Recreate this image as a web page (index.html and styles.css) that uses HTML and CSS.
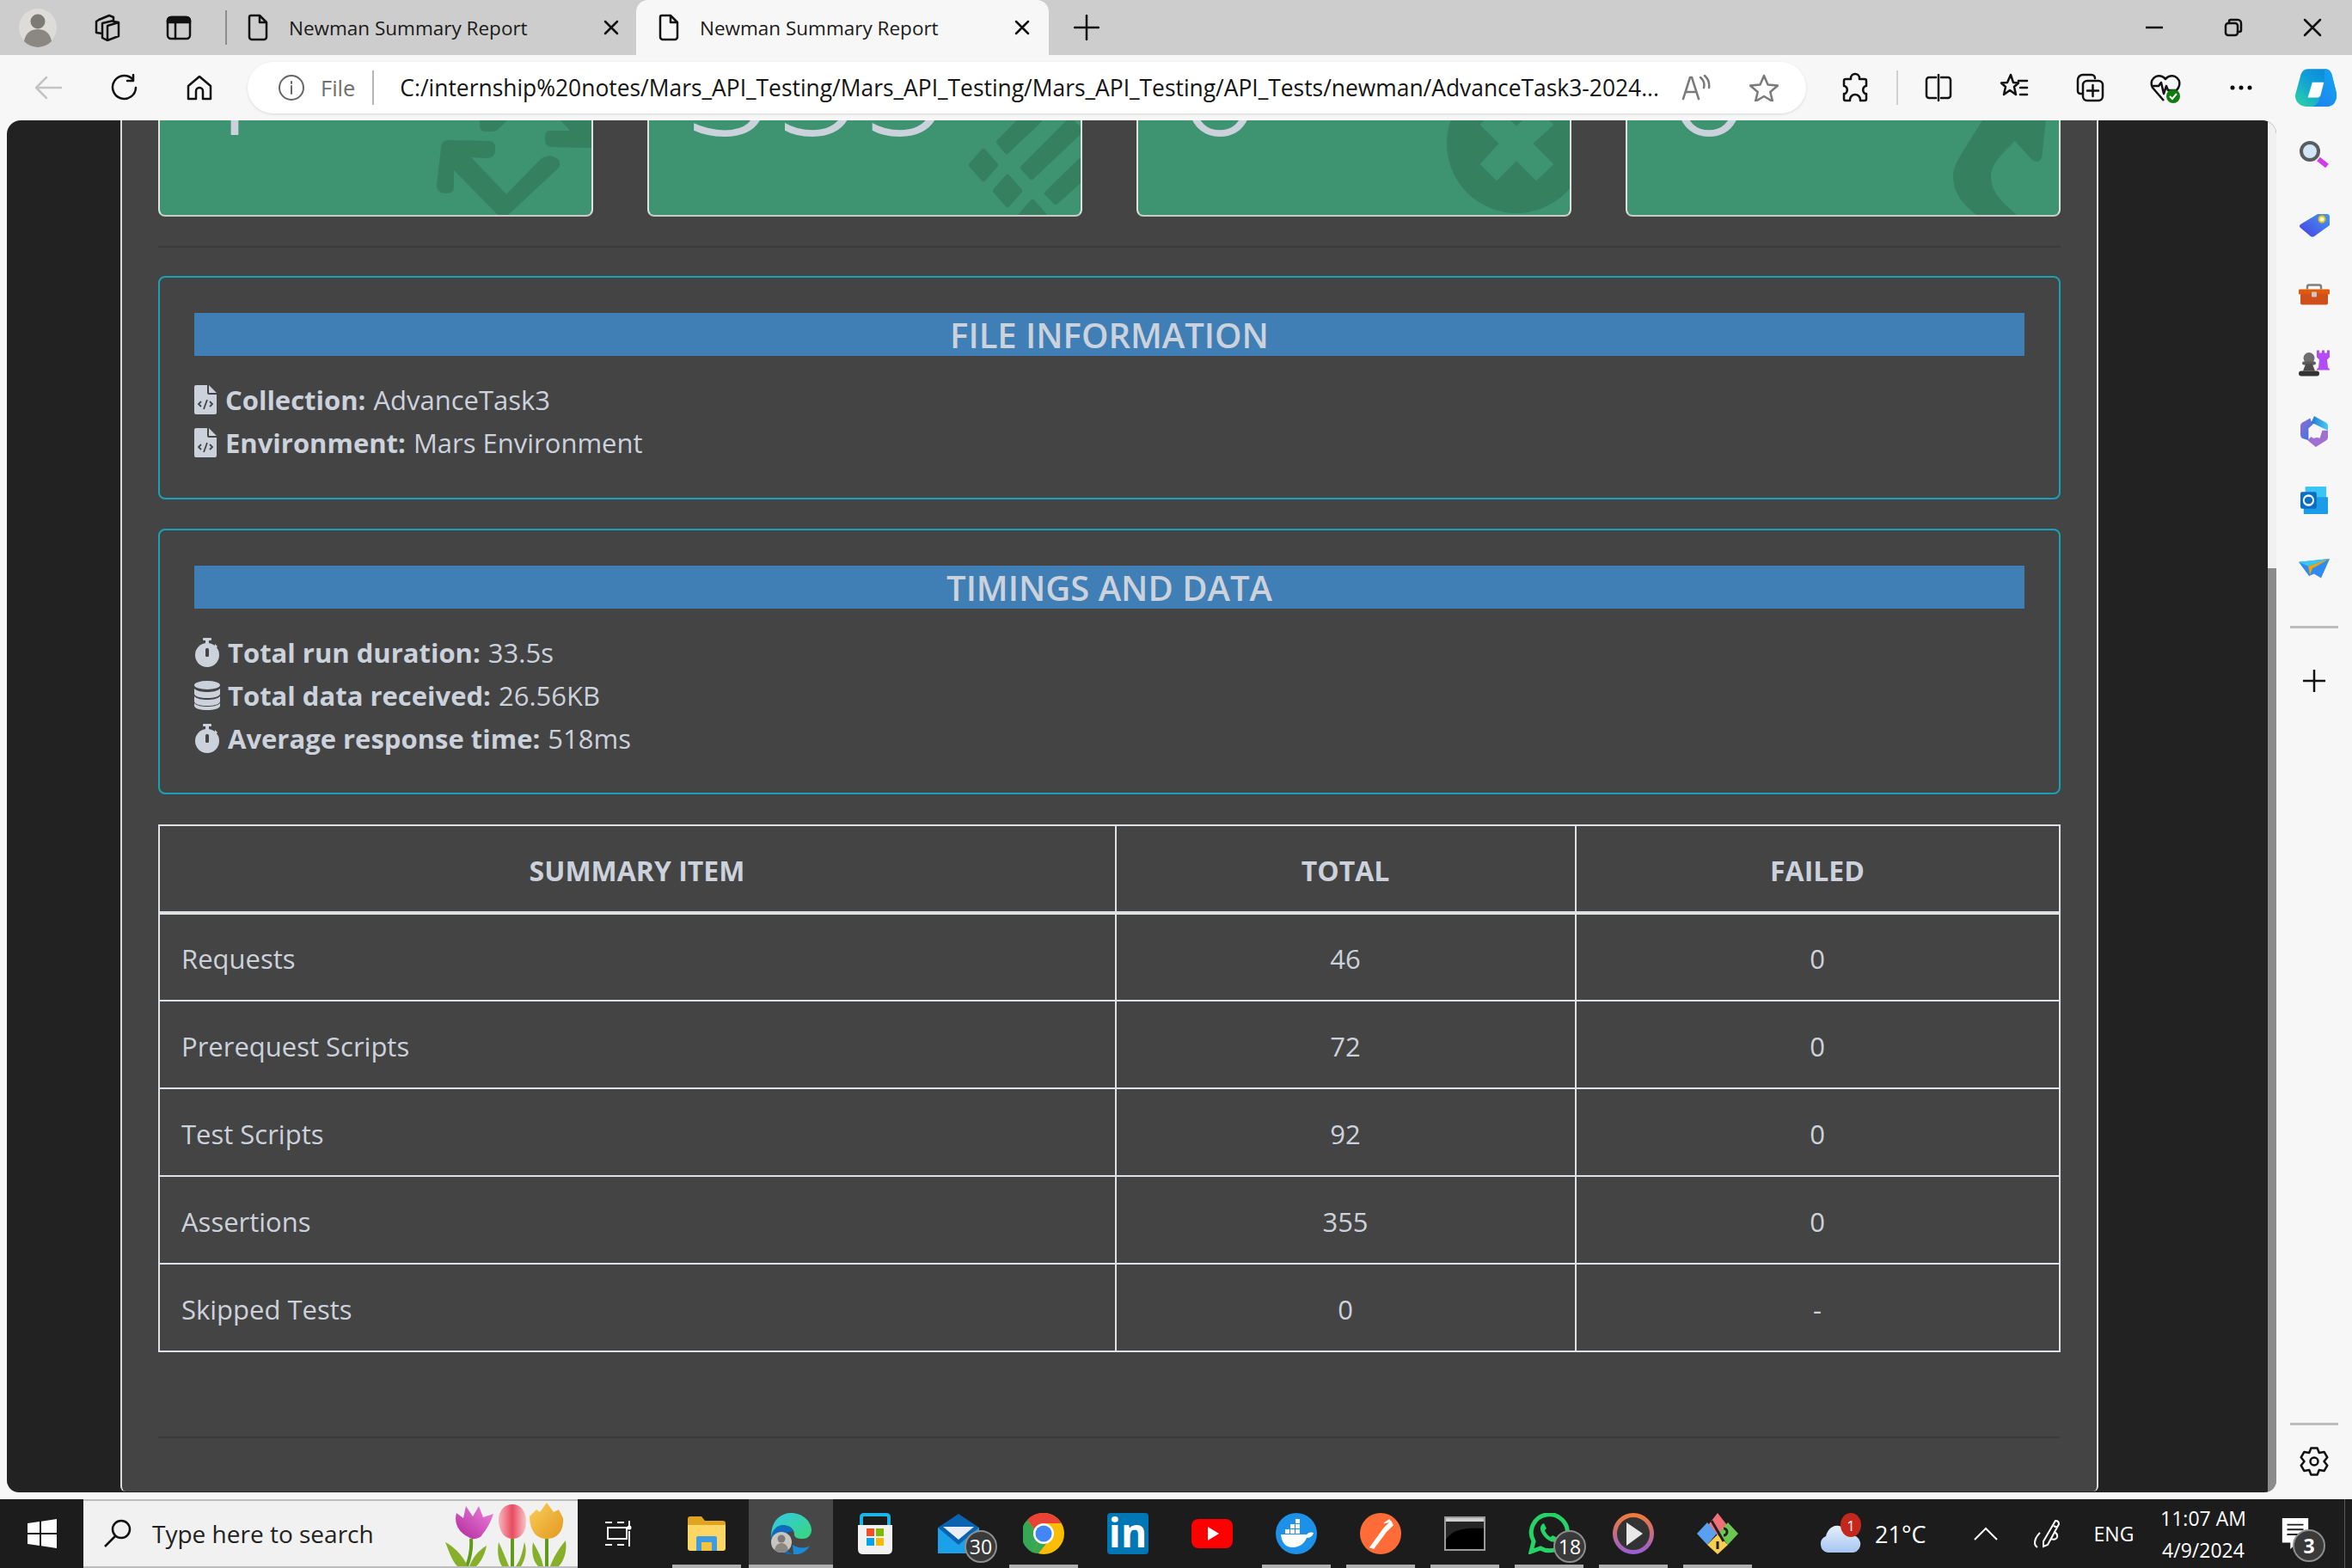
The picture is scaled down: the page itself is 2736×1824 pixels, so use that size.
FILE: index.html
```html
<!DOCTYPE html>
<html lang="en">
<head>
<meta charset="utf-8">
<title>Newman Summary Report</title>
<link rel="stylesheet" href="styles.css">
</head>
<body>
<div class="tabstrip">
  <div class="ts-profile"><svg width="44" height="46" viewBox="0 0 44 46"><circle cx="22" cy="23" r="22" fill="#dedcd8"/><circle cx="22" cy="16" r="8.5" fill="#7d7a75"/><path d="M6 39c2-11 9-14 16-14s14 3 16 14a22 22 0 0 1-32 0z" fill="#8b8883"/></svg></div>
  <div class="ts-work"><svg class="ic" width="34" height="32" viewBox="0 0 34 32"><path d="M8 7 20 2l5 2v5l6 1v16l-13 5-6-3v-5l-7-1V9z M12 22V11l13-3 M18 30V14l13-4" /></svg></div>
  <div class="ts-vert"><svg class="ic" width="30" height="30" viewBox="0 0 30 30"><rect x="2" y="3" width="26" height="25" rx="4"/><path d="M2 9h26V7a4 4 0 0 0-4-4H6a4 4 0 0 0-4 4z" fill="#111"/><path d="M11 9v19"/></svg></div>
  <div class="ts-div"></div>
  <div class="tab">
    <svg class="ic doc" width="24" height="32" viewBox="0 0 24 32"><path d="M4 2h10l8 8v17a3 3 0 0 1-3 3H5a3 3 0 0 1-3-3V4a2 2 0 0 1 2-2z M14 2v8h8"/></svg>
    <span class="tab-title">Newman Summary Report</span>
    <svg class="ic tab-x" width="20" height="20" viewBox="0 0 20 20"><path d="M3 3l14 14M17 3L3 17"/></svg>
  </div>
  <div class="tab tab-active">
    <svg class="ic doc" width="24" height="32" viewBox="0 0 24 32"><path d="M4 2h10l8 8v17a3 3 0 0 1-3 3H5a3 3 0 0 1-3-3V4a2 2 0 0 1 2-2z M14 2v8h8"/></svg>
    <span class="tab-title">Newman Summary Report</span>
    <svg class="ic tab-x" width="20" height="20" viewBox="0 0 20 20"><path d="M3 3l14 14M17 3L3 17"/></svg>
  </div>
  <div class="ts-new"><svg class="ic" width="30" height="30" viewBox="0 0 30 30"><path d="M15 1v28M1 15h28"/></svg></div>
  <div class="grow"></div>
  <div class="win"><svg class="ic" width="20" height="4" viewBox="0 0 20 4"><path d="M0 2h20"/></svg></div>
  <div class="win"><svg class="ic" width="22" height="22" viewBox="0 0 22 22"><rect x="2" y="6" width="14" height="14" rx="3"/><path d="M6 6V4a2 2 0 0 1 2-2h8a4 4 0 0 1 4 4v8a2 2 0 0 1-2 2h-2"/></svg></div>
  <div class="win"><svg class="ic" width="22" height="22" viewBox="0 0 22 22"><path d="M2 2l18 18M20 2L2 20"/></svg></div>
</div>

<div class="toolbar">
  <div class="tb"><svg class="ic ic-dim" width="34" height="30" viewBox="0 0 34 30"><path d="M32 15H3M15 3 3 15l12 12"/></svg></div>
  <div class="tb"><svg class="ic" width="32" height="32" viewBox="0 0 32 32"><path d="M27 7a13.500 13.500 0 1 0 3 9M27 1v7h-7"/></svg></div>
  <div class="tb"><svg class="ic" width="32" height="32" viewBox="0 0 32 32"><path d="M16 3 3 14v15h9v-9a4 4 0 0 1 8 0v9h9V14z"/></svg></div>
  <div class="address">
    <svg class="ic ic-info" width="32" height="32" viewBox="0 0 32 32"><circle cx="16" cy="16" r="14"/><path d="M16 14v9M16 9v2"/></svg>
    <span class="addr-file">File</span>
    <span class="addr-div"></span>
    <span class="addr-url">C:/internship%20notes/Mars_API_Testing/Mars_API_Testing/Mars_API_Testing/API_Tests/newman/AdvanceTask3-2024...</span>
    <svg class="ic ic-grey addr-read" width="34" height="32" viewBox="0 0 34 32"><path d="M2 29 10 4h2l8 25M5 21h12M22 4a12 12 0 0 1 4 12M27 2a16 16 0 0 1 5 14"/></svg>
    <svg class="ic ic-grey addr-star" width="34" height="32" viewBox="0 0 34 32"><path d="M17 2l4.500 10.500 11.500 1-8.700 7.500 2.700 11L17 26l-10 6 2.700-11L1 13.500l11.500-1z"/></svg>
  </div>
  <div class="tb tb-ext"><svg class="ic" width="34" height="36" viewBox="0 0 34 36"><path d="M17 2a5 5 0 0 1 5 5v1h6a2 2 0 0 1 2 2v6h-1a5 5 0 0 0 0 9h1v6a2 2 0 0 1-2 2h-5v-1a6 6 0 0 0-12 0v1H6a2 2 0 0 1-2-2v-6h1a5 5 0 0 0 0-9H4v-6a2 2 0 0 1 2-2h6V7a5 5 0 0 1 5-5z"/></svg></div>
  <div class="tb-div"></div>
  <div class="tb"><svg class="ic" width="32" height="32" viewBox="0 0 32 32"><path d="M16 1v30M13 4H5a3 3 0 0 0-3 3v18a3 3 0 0 0 3 3h8M19 4h8a3 3 0 0 1 3 3v18a3 3 0 0 1-3 3h-8"/></svg></div>
  <div class="tb"><svg class="ic" width="34" height="34" viewBox="0 0 34 34"><path d="M13 2l3 9 6 .5-5 4.500 2 9-7-5-7 5 2-9-5-4.500 7-.5zM22 9h10M24 17h8M24 25h8"/></svg></div>
  <div class="tb"><svg class="ic" width="34" height="34" viewBox="0 0 34 34"><path d="M8 24H6a3 3 0 0 1-3-3V8a6 6 0 0 1 6-6h10a4 4 0 0 1 4 4"/><rect x="9" y="9" width="23" height="23" rx="5"/><path d="M20.500 14v13M14 20.500h13"/></svg></div>
  <div class="tb"><svg width="38" height="38" viewBox="0 0 38 38"><path class="ic-p" d="M17 34 4 19a9 9 0 0 1 13-12l2 2 2-2a9 9 0 0 1 13 12l-2 3H22l-2-5-3 9-3-13-3 4H4"/><circle cx="28" cy="29" r="8" fill="#107c10"/><path d="M24 29l3 3 5-6" fill="none" stroke="#fff" stroke-width="2"/></svg></div>
  <div class="tb"><svg width="28" height="8" viewBox="0 0 28 8"><circle cx="4" cy="4" r="2.500"/><circle cx="14" cy="4" r="2.500"/><circle cx="24" cy="4" r="2.500"/></svg></div>
  <div class="tb tb-copilot"><svg width="50" height="46" viewBox="0 0 48 44"><defs><linearGradient id="cpa" x1="0" y1="1" x2="1" y2="0"><stop offset="0" stop-color="#2fd6a0"/><stop offset=".5" stop-color="#10a0d8"/><stop offset="1" stop-color="#0b7fd8"/></linearGradient><linearGradient id="cpb" x1="0" y1="1" x2="1" y2="0"><stop offset="0" stop-color="#1f7ff0"/><stop offset="1" stop-color="#12a8f0"/></linearGradient></defs><path d="M15 1h19c5 0 7 3 8 7l5 20c1 8-3 15-10 15H13C6 43 0 37 1 30L7 8c1-4 4-7 8-7z" fill="url(#cpa)"/><path d="M34 1c5 0 7 3 8 7l5 20c1 8-3 15-10 15H20c4-1 7-4 8-8l5-17c1-4 0-12 1-17z" fill="url(#cpb)"/><path d="M20 16h13l-4 15c-1 1-2 2-4 2H15z" fill="#fff"/></svg></div>
</div>

<div class="main">
  <div class="viewport">
    <div class="scroller">
      <div class="report">
        <div class="cards">
          <div class="card">
            <svg class="card-art" viewBox="184 0 506 252"><path d="M513 172q0-9 9-9l46 1q8 0 8 8v4q-1 8-10 8l-18-1 41 43 41-42q11-6 20 2 3 6-1 10l-60 56h-8l-53-54v19q0 8-9 8-11 0-11-10z M558 140v7q0 6 8 6h6q5 0 8-3l10-10z M652 140l11 12h-23q-6 0-6 8v3q0 8 8 8l46 1v-32z"/></svg>
            <div class="card-num card-num-one">1</div>
          </div>
          <div class="card">
            <svg class="card-art" viewBox="753 0 506 252"><path class="round" d="M1130 192 1144 176 1158 192 1144 208z M1158 222 1172 206 1186 222 1172 238z M1187 251 1201 235 1215 251 1201 267z M1187 140h22l-38 36-9-11z M1245 140l12 12-57 54-10-11z M1257 187v22l-29 26-10-10z"/></svg>
            <div class="card-num">355</div>
          </div>
          <div class="card">
            <svg class="card-art" viewBox="1322 0 506 252"><circle cx="1764" cy="167" r="81"/><path class="cut" d="M1745 167 1723 145 1741 127 1764 148 1787 127 1806 145 1782 167 1806 191 1787 209 1764 186 1741 209 1723 191z"/></svg>
            <div class="card-num">0</div>
          </div>
          <div class="card">
            <svg class="card-art" viewBox="1891 0 506 252"><path d="M2312 130C2285 175 2272 190 2272 205 2272 225 2285 240 2302 252H2348C2330 235 2316 225 2316 205 2316 190 2330 178 2344 164L2362 184Q2370 192 2375 184L2381 130z"/></svg>
            <div class="card-num">0</div>
          </div>
        </div>
        <hr class="rule rule-top">
        <section class="box">
          <h4 class="box-title">FILE INFORMATION</h4>
          <div class="box-rows">
            <div class="info">
              <svg class="ri ri-file" width="26" height="34" viewBox="0 0 26 34"><path d="M2 0h13v9q0 2 2 2h9v21q0 2-2 2H2q-2 0-2-2V2q0-2 2-2z M17 0l9 9h-9z"/><path class="ri-code" d="M8 19l-3 3 3 3M18 19l3 3-3 3M15 17l-4 11"/></svg>
              <b>Collection:</b> <span>AdvanceTask3</span>
            </div>
            <div class="info">
              <svg class="ri ri-file" width="26" height="34" viewBox="0 0 26 34"><path d="M2 0h13v9q0 2 2 2h9v21q0 2-2 2H2q-2 0-2-2V2q0-2 2-2z M17 0l9 9h-9z"/><path class="ri-code" d="M8 19l-3 3 3 3M18 19l3 3-3 3M15 17l-4 11"/></svg>
              <b>Environment:</b> <span>Mars Environment</span>
            </div>
          </div>
        </section>
        <section class="box box-time">
          <h4 class="box-title">TIMINGS AND DATA</h4>
          <div class="box-rows">
            <div class="info">
              <svg class="ri ri-wide" width="30" height="34" viewBox="0 0 30 34"><rect x="10" y="0" width="10" height="3" rx="1"/><rect x="13" y="2" width="4" height="6"/><path d="M24 7l3 3-3 3z"/><circle cx="15" cy="20" r="14"/><rect class="ri-hand" x="13" y="12" width="4" height="10" rx="1.500"/></svg>
              <b>Total run duration:</b> <span>33.5s</span>
            </div>
            <div class="info">
              <svg class="ri ri-wide" width="30" height="34" viewBox="0 0 30 34"><ellipse cx="15" cy="5" rx="15" ry="5"/><path d="M0 9v6c0 3 7 5 15 5s15-2 15-5V9c-3 3-9 4-15 4S3 12 0 9z M0 18v6c0 3 7 5 15 5s15-2 15-5v-6c-3 3-9 4-15 4S3 21 0 18z M0 26v3c0 3 7 5 15 5s15-2 15-5v-3c-3 3-9 4-15 4S3 29 0 26z"/></svg>
              <b>Total data received:</b> <span>26.56KB</span>
            </div>
            <div class="info">
              <svg class="ri ri-wide" width="30" height="34" viewBox="0 0 30 34"><rect x="10" y="0" width="10" height="3" rx="1"/><rect x="13" y="2" width="4" height="6"/><path d="M24 7l3 3-3 3z"/><circle cx="15" cy="20" r="14"/><rect class="ri-hand" x="13" y="12" width="4" height="10" rx="1.500"/></svg>
              <b>Average response time:</b> <span>518ms</span>
            </div>
          </div>
        </section>
        <table class="summary">
          <colgroup><col class="c1"><col class="c2"><col class="c3"></colgroup>
          <thead><tr><th>SUMMARY ITEM</th><th>TOTAL</th><th>FAILED</th></tr></thead>
          <tbody>
            <tr><td>Requests</td><td>46</td><td>0</td></tr>
            <tr><td>Prerequest Scripts</td><td>72</td><td>0</td></tr>
            <tr><td>Test Scripts</td><td>92</td><td>0</td></tr>
            <tr><td>Assertions</td><td>355</td><td>0</td></tr>
            <tr><td>Skipped Tests</td><td>0</td><td>-</td></tr>
          </tbody>
        </table>
        <hr class="rule rule-bottom">
      </div>
    </div>
    <div class="scrollbar"><div class="thumb"></div></div>
  </div>

  <aside class="sidebar">
    <div class="sb"><svg width="36" height="36" viewBox="0 0 36 36"><circle cx="13" cy="13" r="10" fill="#cfe7f8" stroke="#5c5c5c" stroke-width="4"/><path d="M23 22l10 8" stroke="#d13be8" stroke-width="6"/></svg></div>
    <div class="sb"><svg width="36" height="32" viewBox="0 0 36 28"><defs><linearGradient id="tag" x1="0" y1="1" x2="1" y2="0"><stop offset="0" stop-color="#4b3de0"/><stop offset="1" stop-color="#3f9bf5"/></linearGradient></defs><path d="M2 13 22 1h11q3 0 3 3v10L18 27q-2 1-4 0L2 17q-2-2 0-4z" fill="url(#tag)"/><circle cx="27" cy="7" r="3.500" fill="#fff" stroke="#f2c200" stroke-width="2"/></svg></div>
    <div class="sb"><svg width="36" height="27" viewBox="0 0 36 24"><path d="M10 6V3q0-2 2-2h12q2 0 2 2v3" fill="none" stroke="#808080" stroke-width="2.500"/><rect x="0" y="6" width="36" height="6" rx="1" fill="#e05a0c"/><rect x="2" y="11" width="32" height="13" rx="2" fill="#d0501c"/><rect x="15" y="9" width="6" height="6" rx="1" fill="#c9c9c9"/></svg></div>
    <div class="sb"><svg width="36" height="37" viewBox="0 0 36 30"><circle cx="12" cy="9" r="6.500" fill="#6e6e6e"/><rect x="4" y="13" width="16" height="4" rx="2" fill="#5b5b5b"/><path d="M8 16h8l3 8H5z" fill="#4c4c4c"/><rect x="0" y="24" width="24" height="6" rx="3" fill="#333"/><path d="M21 0h3v3h3V0h3v3h3V0h3v8l-3 3 1 9 2 2v1H21v-1l2-2 1-9-3-3z" fill="#b44cf5"/></svg></div>
    <div class="sb"><svg width="32" height="36" viewBox="0 0 34 28" preserveAspectRatio="none"><defs><linearGradient id="o1" x1="0" y1="0" x2="1" y2="1"><stop offset="0" stop-color="#9a6ad8"/><stop offset="1" stop-color="#2a7ad8"/></linearGradient><linearGradient id="o2" x1="0" y1="0" x2="1" y2="0"><stop offset="0" stop-color="#2a6ed0"/><stop offset="1" stop-color="#40d0f0"/></linearGradient></defs><path d="M17 0l15 6q2 1 2 3v4l-9-3-8-3-5 1z" fill="url(#o2)"/><path d="M2 6l10-4 3 6-5 3v11L2 20q-2-1-2-3V9q0-2 2-3z" fill="url(#o1)"/><path d="M34 13v6q0 2-2 3l-13 6-10-6 5-4 10 2 3-7z" fill="#a070d0"/><circle cx="17" cy="14" r="6" fill="#f7f7f7"/></svg></div>
    <div class="sb"><svg width="32" height="32" viewBox="0 0 34 26" preserveAspectRatio="none"><rect x="6" y="0" width="26" height="16" rx="1" fill="#39c5f5"/><path d="M4 10h30v15q0 1-1 1H5q-1 0-1-1z" fill="#1b9ce8"/><rect x="0" y="5" width="20" height="16" rx="2" fill="#0a6fc2"/><ellipse cx="10" cy="13" rx="6" ry="4.500" fill="none" stroke="#fff" stroke-width="2"/></svg></div>
    <div class="sb"><svg width="36" height="25" viewBox="0 0 36 20" preserveAspectRatio="none"><path d="M0 3 36 0 26 18 18 14l-6 2z" fill="#2f8bef"/><path d="M0 3l36-3-25 7z" fill="#39c5f5"/><path d="M36 0 11 7l2 8 3-6z" fill="#f0a30a"/></svg></div>
    <div class="sb-line sb-line-top"></div>
    <div class="sb sb-plus"><svg class="ic" width="26" height="26" viewBox="0 0 26 26"><path d="M13 0v26M0 13h26"/></svg></div>
    <div class="sb-line sb-line-bottom"></div>
    <div class="sb sb-gear"><svg class="ic" width="36" height="36" viewBox="0 0 36 36"><path d="M21.600 2.400 14.400 2.400 12.250 8.040 6.300 7.090 2.700 13.300 6.500 18 2.700 22.700 6.300 28.900 12.250 27.960 14.400 33.600 21.600 33.600 23.750 27.960 29.700 28.900 33.300 22.700 29.500 18 33.300 13.300 29.700 7.090 23.750 8.040z"/><circle cx="18" cy="18" r="4.500"/></svg></div>
  </aside>
</div>

<footer class="taskbar">
  <div class="start"><svg width="34" height="34" viewBox="0 0 34 34"><path d="M0 5l14-2v13H0zM16 2.700 34 0v16H16zM0 18h14v13L0 29zM16 18h18v16l-18-2.700z" fill="#fff"/></svg></div>
  <div class="search">
    <svg class="search-ic" width="34" height="34" viewBox="0 0 34 34"><circle cx="21" cy="12" r="10"/><path d="M14 20 2 32"/></svg>
    <span class="search-text">Type here to search</span>
    <svg class="tulips" width="142" height="74" viewBox="0 0 142 74"><defs><linearGradient id="tp" x1="0" y1="1" x2="1" y2="0"><stop offset="0" stop-color="#b0289c"/><stop offset="1" stop-color="#f084dc"/></linearGradient><linearGradient id="tc" x1="0" y1="0" x2="1" y2="0"><stop offset="0" stop-color="#f7b6bc"/><stop offset=".5" stop-color="#e84a60"/><stop offset="1" stop-color="#f8c4c8"/></linearGradient><linearGradient id="ty" x1="0" y1="0" x2="1" y2="1"><stop offset="0" stop-color="#f8cf5c"/><stop offset="1" stop-color="#e4981e"/></linearGradient></defs><path d="M30 42c1 12-2 24-5 32M78 42v32M118 42v32" fill="none" stroke="#5f9a18" stroke-width="4"/><path d="M26 74C20 60 8 50 0 46c4 10 8 22 14 28zM28 74c4-10 10-18 20-24-2 10-6 18-12 24zM74 74C70 64 66 54 62 46c-2 12 0 22 4 28zM82 74c6-8 8-18 10-28 4 10 0 22-4 28zM114 74c-2-10-6-18-12-28-2 12 0 22 6 28zM122 74c4-10 8-18 18-30 2 12-2 24-8 30z" fill="#86b02a"/><path d="M13 12l8 6 3-14 8 12 7-12 5 13 12-4c-3 10-8 18-13 24-2 5-12 7-16 3C14 34 10 22 13 12z" fill="url(#tp)"/><path d="M62 20C62 10 68 2 78 2s16 8 16 20c0 12-6 20-16 20S62 32 62 20z" fill="url(#tc)"/><path d="M98 16l8-8 4 3 8-11 8 11 6-3 5 10c1 14-6 24-19 24-14 0-20-12-20-26z" fill="url(#ty)"/></svg>
  </div>
  <div class="tasks">
    <div class="task"><svg class="task-view" width="36" height="34" viewBox="0 0 36 34"><g fill="none" stroke="#fff" stroke-width="2"><path d="M2 4h8M16 4h8M30 2v6M5 10h22v13H5zM2 30h8M16 30h8M30 14v18"/></g><circle cx="30" cy="10" r="2.500" fill="#fff"/></svg></div>
    <div class="task run"><svg width="44" height="40" viewBox="0 0 44 40"><path d="M0 3q0-3 3-3h13l4 5h21q3 0 3 3v6H0z" fill="#e0a520"/><path d="M0 10h44v27q0 3-3 3H3q-3 0-3-3z" fill="#fdd766"/><path d="M10 25q0-2 2-2h20q2 0 2 2v15H10z" fill="#3f9ce0"/><rect x="16" y="30" width="12" height="10" fill="#f2c33f"/></svg></div>
    <div class="task run task-active"><svg width="48" height="48" viewBox="0 0 48 48"><defs><linearGradient id="ed" x1="0" y1="0" x2="1" y2="1"><stop offset="0" stop-color="#34c8e8"/><stop offset="1" stop-color="#38d878"/></linearGradient></defs><path d="M24 0c14 0 24 10 24 20 0 5-4 10-10 10-7 0-10-2-10-5 0-8-8-11-14-10C8 17 3 22 1 29 0 12 10 0 24 0z" fill="url(#ed)"/><path d="M1 28c1-8 7-14 14-14 6 0 11 3 12 8-6-2-13 4-12 14 0 4 4 10 12 12C11 48 1 40 1 28z" fill="#0f6cbd"/><path d="M27 48c8 1 15-3 19-10-6 4-14 3-20-1z" fill="#1b8ad8"/><circle cx="13" cy="34" r="12" fill="#c8c6c2"/><circle cx="13" cy="30" r="4.500" fill="#7d7a75"/><path d="M5 43c1-6 5-8 8-8s7 2 8 8a12 12 0 0 1-16 0z" fill="#8b8883"/></svg></div>
    <div class="task"><svg width="44" height="48" viewBox="0 0 44 48"><path d="M6 14V5q0-3 3-3h26q3 0 3 3v9" fill="none" stroke="#1cb4e8" stroke-width="4"/><path d="M2 14h40v28q0 6-6 6H8q-6 0-6-6z" fill="#f2f2f2"/><rect x="12" y="18" width="9" height="9" fill="#f25022"/><rect x="23" y="18" width="9" height="9" fill="#7fba00"/><rect x="12" y="29" width="9" height="9" fill="#00a4ef"/><rect x="23" y="29" width="9" height="9" fill="#ffb900"/></svg></div>
    <div class="task"><svg width="50" height="46" viewBox="0 0 50 46"><path d="M0 16 24 0l24 16v30H0z" fill="#0b62b0"/><path d="M0 16v30h48V16L24 36z" fill="#1ba1ea"/><path d="M6 15h36L24 30z" fill="#e8eef3"/></svg><span class="count count-mail">30</span></div>
    <div class="task run"><svg width="48" height="48" viewBox="0 0 48 48"><circle cx="24" cy="24" r="24" fill="#fbbc04"/><path d="M24 0a24 24 0 0 1 21 12H24a12 12 0 0 0-11 7L5 8a24 24 0 0 1 19-8z" fill="#ea4335"/><path d="M5 8l8 11a12 12 0 0 0 5 15l-7 12A24 24 0 0 1 5 8z" fill="#34a853"/><path d="M18 34l5 0 7-2-12 15A24 24 0 0 1 11 46z" fill="#34a853"/><circle cx="24" cy="24" r="12" fill="#fff"/><circle cx="24" cy="24" r="9.500" fill="#4285f4"/></svg></div>
    <div class="task"><svg width="48" height="48" viewBox="0 0 48 48"><rect width="48" height="48" rx="4" fill="#0077b5"/><text x="24" y="40" text-anchor="middle" class="li-text">in</text></svg></div>
    <div class="task"><svg width="48" height="34" viewBox="0 0 48 34"><rect width="48" height="34" rx="8" fill="#f00"/><path d="M19 9l13 8-13 8z" fill="#fff"/></svg></div>
    <div class="task run"><svg width="48" height="48" viewBox="0 0 48 48"><circle cx="24" cy="24" r="24" fill="#1d91e8"/><path d="M6 25h30c2-3 6-3 8-2-1 4-4 6-8 6-3 7-9 11-16 11-9 0-13-6-14-15z" fill="#fff"/><g fill="#fff"><rect x="11" y="19" width="5" height="5"/><rect x="17" y="19" width="5" height="5"/><rect x="23" y="19" width="5" height="5"/><rect x="17" y="13" width="5" height="5"/><rect x="23" y="13" width="5" height="5"/><rect x="23" y="7" width="5" height="5"/></g></svg></div>
    <div class="task run"><svg width="48" height="48" viewBox="0 0 48 48"><circle cx="24" cy="24" r="24" fill="#ff6c37"/><path d="M12 40 28 18l8-8 2 4-8 8-14 19zM28 12l6-4 2 3" fill="#fff" stroke="#fff" stroke-width="1.500"/></svg></div>
    <div class="task run"><svg width="48" height="40" viewBox="0 0 48 40"><rect x="1" y="1" width="46" height="38" fill="#000" stroke="#9a9a9a" stroke-width="2"/><rect x="2" y="2" width="44" height="4" fill="#cfcfcf"/><path d="M2 27c8-13 24-14 44-13V6H2z" fill="#262626"/></svg></div>
    <div class="task run"><svg width="48" height="48" viewBox="0 0 48 48"><path d="M3 45l3-12a21 21 0 1 1 8 8z" fill="none" stroke="#25d366" stroke-width="5"/><path d="M16 13c-3 3-3 8 2 14s11 8 14 6l2-4-6-3-2 2c-3-1-6-5-7-8l2-2-3-6z" fill="#25d366"/></svg><span class="count count-wa">18</span></div>
    <div class="task run"><svg width="48" height="48" viewBox="0 0 48 48"><defs><linearGradient id="pl" x1="0" y1="0" x2="0" y2="1"><stop offset="0" stop-color="#f07a3a"/><stop offset="1" stop-color="#9a5fd0"/></linearGradient></defs><circle cx="24" cy="24" r="21.500" fill="#333" stroke="url(#pl)" stroke-width="5"/><path d="M16 11l19 13-19 14z" fill="#e8e8e8"/></svg></div>
    <div class="task run"><svg width="48" height="48" viewBox="0 0 48 48"><path d="M24 0l11 14-11 12-11-12z" fill="#f07078"/><path d="M0 24l12-13 11 13-11 13z" fill="#5aa0f0"/><path d="M48 24 36 11 25 24l11 13z" fill="#6cc850"/><path d="M24 48 12 37 24 25l12 12z" fill="#f8d050"/><path d="M17 9l14 24M31 18a4 4 0 1 1 0 8M24 33v9" fill="none" stroke="#222" stroke-width="3"/></svg></div>
  </div>
  <div class="tray">
    <div class="t-cloud"><svg width="50" height="34" viewBox="0 0 50 34"><defs><linearGradient id="cl" x1="0" y1="0" x2="0" y2="1"><stop offset="0" stop-color="#e6f0fa"/><stop offset="1" stop-color="#a6c6f2"/></linearGradient></defs><path d="M10 34a10 10 0 0 1-2-19C10 6 18 0 26 4c5 2 9 5 10 10a10 10 0 0 1 4 20z" fill="url(#cl)"/></svg><span class="t-alert">1</span></div>
    <div class="t-temp">21°C</div>
    <div class="t-up"><svg width="28" height="16" viewBox="0 0 28 16"><path d="M1 15 14 2l13 13" fill="none" stroke="#fff" stroke-width="2"/></svg></div>
    <div class="t-pen"><svg width="34" height="34" viewBox="0 0 34 34"><path d="M12 26 26 2q4 0 4 4L17 30l-5 2zM24 8l4 2M8 16q-6 6-6 12 0 3 3 5M24 15q5 2 4 6t-8 2" fill="none" stroke="#fff" stroke-width="2"/></svg></div>
    <div class="t-lang">ENG</div>
    <div class="t-clock"><span>11:07 AM</span><span>4/9/2024</span></div>
    <div class="t-notif"><svg width="32" height="36" viewBox="0 0 32 38"><path d="M0 0h32v30H18l-8 8v-8H0z" fill="#fff"/><path d="M6 8h20M6 14h20M6 20h20" stroke="#1c1c1c" stroke-width="2"/></svg><span class="count count-note">3</span></div>
    <div class="t-edge"></div>
  </div>
</footer>
</body>
</html>
```

FILE: styles.css
```css
* { box-sizing: border-box; }
html, body { margin: 0; padding: 0; }
body {
  width: 2736px;
  height: 1824px;
  overflow: hidden;
  display: flex;
  flex-direction: column;
  font-family: "Open Sans", "Liberation Sans", sans-serif;
  background: #f7f7f7;
}
.grow { flex: 1; }

/* shared stroke icons */
.ic { fill: none; stroke: #111; stroke-width: 2.5; stroke-linejoin: round; stroke-linecap: round; }
.ic-p { fill: none; stroke: #111; stroke-width: 2.5; stroke-linejoin: round; }
.ic-dim { stroke: #c4c4c4; }
.ic-grey { stroke: #7a7a7a; }

/* tab strip */
.tabstrip { height: 64px; flex: none; display: flex; align-items: center; background: #cdcdcd; }
.ts-profile { width: 88px; display: flex; justify-content: center; }
.ts-work { width: 72px; display: flex; justify-content: center; }
.ts-vert { width: 96px; display: flex; justify-content: center; }
.ts-div { width: 2px; height: 40px; margin-left: 6px; background: #8d8d8d; flex: none; }
.tab {
  width: 476px;
  height: 64px;
  flex: none;
  display: flex;
  align-items: center;
  padding: 0 19px 0 24px;
  border-radius: 14px 14px 0 0;
}
.tab-active { width: 480px; padding: 0 21px 0 26px; background: #f7f7f7; }
.tab-title { margin-left: 24px; font-size: 22.5px; color: #1a1a1a; white-space: nowrap; }
.tab-x { margin-left: auto; }
.ts-new { width: 88px; display: flex; justify-content: center; }
.win { width: 92px; flex: none; display: flex; justify-content: center; }

/* toolbar */
.toolbar { height: 76px; flex: none; display: flex; align-items: center; padding-left: 12px; background: #f7f7f7; }
.tb { width: 88px; height: 60px; flex: none; display: flex; align-items: center; justify-content: center; }
.tb-ext { margin-left: 13px; }
.tb-div { width: 2px; height: 40px; margin: 0 3px 0 4px; background: #d0d0d0; flex: none; }
.tb-copilot { flex: 1; }
.address {
  width: 1813px;
  height: 60px;
  margin-left: 12px;
  flex: none;
  display: flex;
  align-items: center;
  padding-left: 35px;
  background: #fff;
  border-radius: 30px;
  box-shadow: 0 1px 3px rgba(0, 0, 0, .12);
}
.ic-info { stroke: #666; stroke-width: 2; }
.addr-file { margin-left: 18px; font-size: 25.5px; color: #707070; }
.addr-div { width: 2px; height: 40px; margin: 0 30px 0 20px; background: #b5b5b5; flex: none; }
.addr-url { font-size: 26.4px; color: #141414; white-space: nowrap; }
.addr-read { margin-left: auto; }
.addr-star { margin: 0 32px 0 45px; }

/* main */
.main { height: 1604px; flex: none; display: flex; padding: 0 0 8px 8px; }
.viewport {
  width: 2640px;
  flex: none;
  display: flex;
  overflow: hidden;
  background: #222;
  border-radius: 16px 16px 14px 14px;
}
.scroller { flex: 1; overflow: hidden; padding-left: 132px; }
.report {
  width: 2301px;
  height: 1735px;
  margin-top: -140px;
  padding: 0 42px;
  background: #444;
  border: solid #dcdcdc;
  border-width: 0 2px 0 2px;
  border-radius: 0 0 6px 6px;
  color: #ccd2dc;
}
.scrollbar { width: 10px; flex: none; display: flex; flex-direction: column; justify-content: flex-end; background: #f1f1f1; }
.thumb { height: 1075px; background: #8b8b8b; }

/* cards */
.cards { display: grid; grid-template-columns: repeat(4, 506px); justify-content: space-between; }
.card {
  position: relative;
  height: 252px;
  padding-left: 44px;
  overflow: hidden;
  background: #3e9370;
  border: 2px solid #dfe3e0;
  border-bottom-color: #c9cbc9;
  border-radius: 8px;
}
.card-art { position: absolute; left: -2px; top: -2px; width: 506px; height: 252px; fill: #35805f; }
.card-art .round { stroke: #35805f; stroke-width: 6; stroke-linejoin: round; }
.card-art .cut { fill: #3e9370; stroke: #3e9370; stroke-width: 2; stroke-linejoin: round; }
.card-num { position: relative; font-size: 178px; font-weight: 300; line-height: 172px; color: #ccd2dc; }
.card-num-one { margin-left: -12px; }

.rule { height: 2px; margin: 0; border: 0; background: #3b3b3b; }
.rule-top { margin-top: 34px; }
.rule-bottom { margin-top: 98px; }

/* info boxes */
.box {
  margin-top: 33px;
  padding: 41px 40px 39px;
  border: 2px solid #17a2b8;
  border-radius: 8px;
}
.box-time { margin-top: 34px; padding-bottom: 38px; }
.box-title {
  height: 50px;
  margin: 0;
  background: #3f7fb5;
  color: #ccd2dc;
  font-size: 40px;
  font-weight: 600;
  line-height: 52px;
  text-align: center;
  white-space: nowrap;
}
.box-rows { margin-top: 26px; }
.info { height: 50px; display: flex; align-items: center; font-size: 31px; gap: 9px; white-space: pre; }
.info b { font-weight: 700; }
.info span { font-weight: 400; }
.ri { flex: none; fill: #ccd2dc; }
.ri-file { margin-right: 1px; }
.ri-code { fill: none; stroke: #444; stroke-width: 1.800; }
.ri-hand { fill: #444; }

/* table */
.summary {
  width: 100%;
  margin-top: 35px;
  border-collapse: collapse;
  table-layout: fixed;
  font-size: 31px;
}
.c1 { width: 1113px; }
.c2 { width: 535px; }
.summary th, .summary td { height: 102px; padding: 3px 26px 0 25px; border: 2px solid #dee2e6; text-align: center; }
.summary th { height: 102px; font-weight: 700; border-bottom-width: 4px; font-size: 32px; }
.summary td:first-child { text-align: left; }

/* sidebar */
.sidebar { flex: 1; display: flex; flex-direction: column; align-items: center; background: #f7f7f7; }
.sb { width: 100%; height: 80px; flex: none; display: flex; align-items: center; justify-content: center; }
.sb:first-child { height: 82px; }
.sb-line { width: 56px; height: 3px; flex: none; background: #bdbdbd; }
.sb-line-top { margin-top: 26px; }
.sb-plus { margin-top: 21px; }
.sb-line-bottom { margin-top: auto; margin-bottom: 6px; }
.sb-gear { height: 72px; }

/* taskbar */
.taskbar { height: 80px; flex: none; display: flex; align-items: stretch; background: #1c1c1c; color: #fff; }
.start { width: 97px; flex: none; display: flex; align-items: center; justify-content: center; }
.search {
  width: 575px;
  flex: none;
  display: flex;
  align-items: center;
  padding-left: 23px;
  background: #f1f1f1;
  border: solid #bdbdbd;
  border-width: 2px 0;
}
.search-ic { fill: none; stroke: #111; stroke-width: 2.500; }
.search-text { margin-left: 23px; font-size: 28px; color: #222; white-space: nowrap; }
.tulips { margin: 0 12px 0 auto; align-self: flex-end; }
.tasks { margin-left: 3px; display: flex; }
.task { position: relative; width: 98px; flex: none; display: flex; align-items: center; justify-content: center; }
.task-view { margin-right: 8px; }
.run::after {
  content: "";
  position: absolute;
  left: 9px;
  right: 9px;
  bottom: 0;
  height: 4px;
  background: #b0b0b0;
}
.task-active { background: #474747; }
.task-active::after { left: 0; right: 0; }
.li-text { font-family: "Open Sans", sans-serif; font-size: 46px; font-weight: 700; fill: #fff; }
.count {
  position: absolute;
  display: flex;
  align-items: center;
  justify-content: center;
  width: 38px;
  height: 38px;
  border-radius: 50%;
  background: #3a3a3a;
  border: 2px solid #8e8e8e;
  font-size: 23px;
  color: #fff;
}
.count-mail { left: 55px; bottom: 6px; }
.count-wa { left: 54px; bottom: 6px; }
.count-note { left: 39px; top: 35px; font-weight: 700; }

.tray { margin-left: auto; display: flex; align-items: center; font-size: 24px; }
.t-cloud { position: relative; width: 70px; display: flex; justify-content: center; padding-top: 10px; }
.t-alert {
  position: absolute;
  left: 35px;
  top: -2px;
  width: 24px;
  height: 28px;
  display: flex;
  align-items: center;
  justify-content: center;
  border-radius: 50%;
  background: #c4281c;
  font-size: 17px;
}
.t-temp { width: 100px; padding-left: 5px; font-size: 27px; }
.t-up { width: 68px; display: flex; justify-content: center; }
.t-pen { width: 76px; display: flex; justify-content: center; }
.t-lang { width: 78px; text-align: center; font-size: 23px; }
.t-clock { width: 130px; display: flex; flex-direction: column; align-items: center; gap: 13px; font-size: 23px; line-height: 24px; }
.t-notif { position: relative; width: 84px; height: 80px; display: flex; align-items: center; justify-content: center; }
.t-edge { width: 24px; height: 80px; margin: 0; }
.t-edge::before { content: ""; display: block; width: 1px; height: 80px; margin-left: 15px; background: #5a5a5a; }
```
